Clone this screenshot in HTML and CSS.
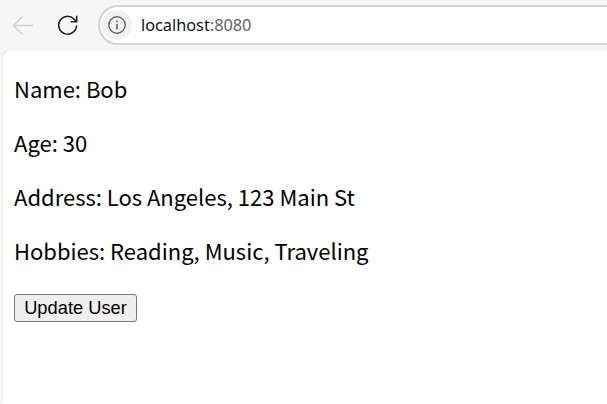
FILE: index.html
```html
<!DOCTYPE html>
<html lang="en">
<head>
<meta charset="utf-8">
<title>localhost:8080</title>
<link rel="stylesheet" href="styles.css">
</head>
<body>
<header class="toolbar">
  <svg class="back" width="24" height="24" viewBox="0 0 24 24" aria-hidden="true"><path d="M22 12.5H2.5M11.5 3.5l-9 9 9 9"/></svg>
  <svg class="reload" width="24" height="24" viewBox="0 0 24 24" aria-hidden="true"><path d="M20.5 12.5a8.9 8.9 0 1 1-2.7-6.6l2.6 2.6"/><path d="M20.7 2.8v6h-6"/></svg>
  <div class="omnibox">
    <span class="info">
      <svg width="20" height="20" viewBox="0 0 20 20" aria-hidden="true"><circle class="info-ring" cx="10" cy="10" r="8.2"/><path class="info-mark" d="M10 9v5.5M10 5.5v1.7"/></svg>
    </span>
    <span class="url">localhost<span class="port">:8080</span></span>
  </div>
</header>
<main class="page">
  <p>Name: Bob</p>
  <p>Age: 30</p>
  <p>Address: Los Angeles, 123 Main St</p>
  <p>Hobbies: Reading, Music, Traveling</p>
  <button type="button">Update User</button>
</main>
</body>
</html>
```
FILE: styles.css
```css
html, body {
  margin: 0;
  height: 100%;
  overflow: hidden;
}
body {
  background: #f7f7f7;
  display: flex;
  flex-direction: column;
}
.toolbar {
  height: 50px;
  flex: none;
  display: flex;
  align-items: center;
  padding-left: 11px;
  box-sizing: border-box;
}
.back {
  fill: none;
  stroke: #d2d2d2;
  stroke-width: 1.5;
  margin-right: 21px;
}
.reload {
  fill: none;
  stroke: #1f1f1f;
  stroke-width: 1.5;
  margin-right: 18px;
}
.omnibox {
  flex: 1;
  height: 40px;
  box-sizing: border-box;
  background: #fff;
  border: 2px solid #d3d3d3;
  border-right: 0;
  border-radius: 20px 0 0 20px;
  display: flex;
  align-items: center;
  padding-left: 2px;
}
.info {
  width: 30px;
  height: 30px;
  border-radius: 50%;
  background: #f1f1f1;
  display: flex;
  align-items: center;
  justify-content: center;
  margin-right: 9px;
}
.info-ring {
  fill: none;
  stroke: #666;
  stroke-width: 1.4;
}
.info-mark {
  fill: none;
  stroke: #666;
  stroke-width: 1.6;
}
.url {
  font: 16.3px "Noto Sans", sans-serif;
  color: #111;
}
.port {
  color: #5f6368;
}
.page {
  flex: 1;
  margin-left: 3px;
  background: #fff;
  border-top-left-radius: 8px;
  box-shadow: 0 0 2px #d0d0d0;
  padding: 22px 11px 0;
  font: 22px/32px "Noto Sans CJK SC", "Noto Sans", sans-serif;
  color: #000;
}
.page p {
  margin: 0 0 22px;
}
button {
  display: block;
  margin-top: 28px;
  width: 123px;
  height: 28px;
  padding: 0;
  font: 18.3px "Liberation Sans", sans-serif;
  color: #000;
  background: #efefef;
  border: 1px solid #767676;
  border-radius: 3px;
}
```
